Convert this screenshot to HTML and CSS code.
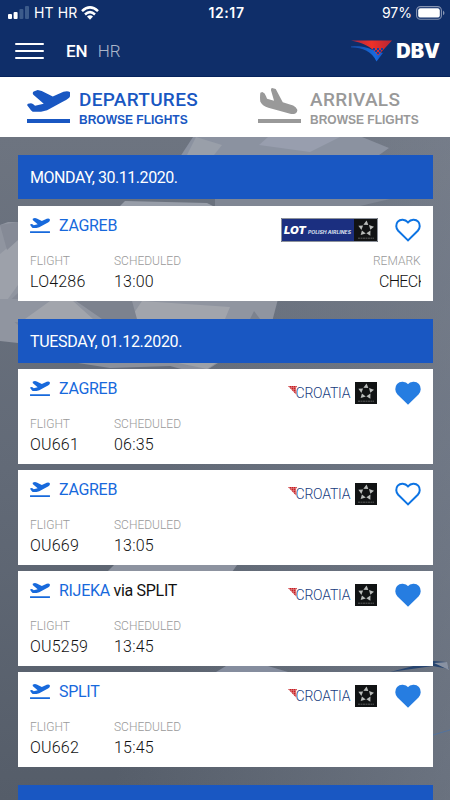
FILE: index.html
```html
<!DOCTYPE html>
<html lang="en">
<head>
    <meta charset="UTF-8">
    <meta name="viewport" content="width=device-width, initial-scale=1.0">
    <title>DBV Departures</title>
    <link rel="stylesheet" href="styles.css">
</head>
<body>
    <!-- shared icons -->
    <svg class="sprite" width="0" height="0">
        <symbol id="takeoff" viewBox="0 0 130 98">
            <path d="M1 46Q0 43 3 41L12 39Q18 40 24 47L50 41L19 14Q15 8 20 4L32 0L44 3L77 19L109 5Q122 1 128 6Q132 14 126 23Q118 30 108 34L60 60L42 65H17Q11 61 8 55ZM0 86H130V98H0Z"/>
        </symbol>
        <symbol id="land" viewBox="0 0 130 104">
            <path d="M7 14L13 12Q21 15 24 24L27 32L48 38L39 7Q38 1 42 0L53 3L74 42L105 52Q114 56 117 64Q119 71 113 75Q106 79 96 77L31 59Q14 54 7 41Q5 29 7 14ZM0 92H130V104H0Z"/>
        </symbol>
        <symbol id="heart" viewBox="0 0 26 24">
            <path d="M13 22.4L3.2 12.8C.8 10.3.6 6.2 2.8 3.7C5.4.8 10 1 13 4.4C16 1 20.6.8 23.2 3.7C25.4 6.2 25.2 10.3 22.8 12.8Z"/>
        </symbol>
        <symbol id="star" viewBox="0 0 22 22">
            <path fill="#111314" d="M0 0H22V22H0Z"/>
            <g fill="#b9bcba">
                <path id="ray" d="M11.6 1.6L13.3 6L8.4 5.8Z"/>
                <use href="#ray" transform="rotate(72 11 9.8)"/>
                <use href="#ray" transform="rotate(144 11 9.8)"/>
                <use href="#ray" transform="rotate(216 11 9.8)"/>
                <use href="#ray" transform="rotate(288 11 9.8)"/>
            </g>
            <path stroke="#5c5e5e" stroke-width="1" stroke-dasharray="2 .5" d="M3 19.2H19"/>
        </symbol>
        <pattern id="checks" width="2" height="2" patternUnits="userSpaceOnUse">
            <path fill="#e08c8c" d="M0 0H2V2H0Z"/>
            <path fill="#c81e24" d="M0 0H1.4V1.4H0Z"/>
        </pattern>
        <symbol id="wing" viewBox="0 0 9 9">
            <path fill="url(#checks)" d="M0 0H9L8 2V8.5Z"/>
        </symbol>
    </svg>

    <header class="header">
        <div class="status">
            <div class="status-left">
                <svg width="22" height="13" viewBox="0 0 22 13">
                    <g fill="#fff"><rect y="8" width="4" height="5" rx="1"/><rect x="5.6" y="6" width="4" height="7" rx="1"/></g>
                    <g fill="#3c5b8b"><rect x="11.4" y="3" width="4" height="10" rx="1"/><rect x="17" width="4" height="13" rx="1"/></g>
                </svg>
                <span class="carrier">HT HR</span>
                <svg width="18" height="14" viewBox="0 0 18 14" fill="none" stroke="#fff" stroke-width="2.5">
                    <path d="M1 5.2Q9-2.4 17 5.2M4 8.5Q9 3.8 14 8.5"/>
                    <path fill="#fff" stroke="none" d="M6 10.6Q9 8.1 12 10.6L9 13.7Z"/>
                </svg>
            </div>
            <span class="clock">12:17</span>
            <div class="status-right">
                <span class="percent">97%</span>
                <svg width="29" height="14" viewBox="0 0 29 14">
                    <rect x=".6" y=".6" width="24.8" height="12.6" rx="3.8" fill="none" stroke="#8795b3" stroke-width="1.1"/>
                    <rect x="2.2" y="2.2" width="21.6" height="9.4" rx="2.2" fill="#fff"/>
                    <path fill="#8795b3" d="M27 4.6Q30 7 27 9.2Z"/>
                </svg>
            </div>
        </div>
        <div class="nav">
            <div class="menu"><i></i><i></i><i></i></div>
            <span class="lang active">EN</span>
            <span class="lang">HR</span>
            <div class="brand">
                <svg width="42" height="22" viewBox="0 0 42 22">
                    <defs>
                        <linearGradient id="red"><stop offset="0" stop-color="#a92744"/><stop offset=".5" stop-color="#ef3128"/><stop offset="1" stop-color="#b62635"/></linearGradient>
                        <linearGradient id="blue"><stop offset="0" stop-color="#154a9f"/><stop offset=".6" stop-color="#176be0"/><stop offset="1" stop-color="#1139a6"/></linearGradient>
                    </defs>
                    <path fill="url(#blue)" d="M0 6.2Q12 5.5 22 10L32 13L41 1L25.5 21.4Q22 14 15 10.5Q9 7.5 0 7.6Z"/>
                    <path fill="url(#red)" d="M0 .4H41L27 15.5Q23 9 15 5.2Q9 2 0 .4Z"/>
                    <path fill="#153f9f" d="M22 8h2v2h-2zM26 8h2v2h-2zM30 8h2v2h-2zM24 10h2v2h-2zM28 10h2v2h-2zM26 12h2v2h-2z"/>
                </svg>
                <span class="code">DBV</span>
            </div>
        </div>
    </header>

    <nav class="tabs">
        <div class="tab active">
            <svg class="tab-icon" width="43.5" height="33"><use href="#takeoff"/></svg>
            <div>
                <div class="tab-title">DEPARTURES</div>
                <div class="tab-sub">BROWSE FLIGHTS</div>
            </div>
        </div>
        <div class="tab">
            <svg class="tab-icon land" width="43.5" height="35"><use href="#land"/></svg>
            <div>
                <div class="tab-title">ARRIVALS</div>
                <div class="tab-sub">BROWSE FLIGHTS</div>
            </div>
        </div>
    </nav>

    <main class="board">
        <svg class="backdrop" width="450" height="663" viewBox="0 137 450 663">
            <path fill="#8b92a0" d="M178 160L193 137H362L389 148L372 160Z"/>
            <path fill="#999fa9" d="M187 155L196 137L222 145L210 160Z"/>
            <path fill="#989eae" d="M259 145L268 137H340L310 152Z"/>
            <path fill="#989ea9" d="M120 206L125 201L207 203L213 206Z"/>
            <path fill="#808794" d="M215 199H390L360 206H215Z"/>
            <path fill="#9095a0" d="M0 225L8 222H18V343L0 341Z"/>
            <path fill="#9da1aa" d="M0 254L18 239V285L0 310Z"/>
            <path fill="#858a96" d="M0 225L18 222V240L7 250ZM0 310L18 293V325Z"/>
            <path fill="#9095a0" d="M0 299H278L272 322H0Z"/>
            <path fill="#a2a5ac" d="M50 301H73L93 319H25ZM130 319L142 301L230 307L225 319Z"/>
            <path fill="#7c828e" d="M76 301H132L137 319H102ZM250 319L254 311L260 319Z"/>
            <path fill="#8b909b" d="M78 363H218L207 370H185L170 366L110 368Z"/>
            <path fill="#9da1a8" d="M178 363H216L207 369Z"/>
            <path fill="#8d93a0" d="M107 572L114 565H237L232 572Z"/>
            <path fill="#858d9e" d="M216 672L226 666H268L288 672Z"/>
            <path fill="#26446f" d="M390 672L433 661L446 662L449 669L433 666Z"/>
            <path fill="#8992a2" d="M434 663L447 662L449 670Z"/>
            <path stroke="#53739e" d="M433 735L450 730"/>
        </svg>

        <section class="day">
            <h2 class="date monday">MONDAY, 30.11.2020.</h2>
            <article class="flight">
                <div class="route">
                    <svg class="plane" width="20" height="15"><use href="#takeoff"/></svg>
                    <span class="city">ZAGREB</span>
                    <svg class="airline lot" width="97" height="24" viewBox="0 0 97 24">
                        <path fill="#1b2f80" d="M0 0H97V24H0Z"/>
                        <text class="lot-name" x="3" y="15.5" textLength="22" lengthAdjust="spacingAndGlyphs">LOT</text>
                        <text class="lot-sub" x="27" y="15.5" textLength="43" lengthAdjust="spacingAndGlyphs">POLISH AIRLINES</text>
                        <path fill="#111314" d="M73 0H97V24H73Z"/>
                        <use href="#star" x="74" y="1" width="22" height="22"/>
                        <path fill="none" stroke="#8d929b" stroke-width="1" d="M.5 .5H96.5V23.5H.5Z"/>
                    </svg>
                    <svg class="heart" width="26" height="24"><use href="#heart"/></svg>
                </div>
                <div class="details">
                    <div class="number"><label>FLIGHT</label><p>LO4286</p></div>
                    <div class="time"><label>SCHEDULED</label><p>13:00</p></div>
                    <div class="remark"><label>REMARK</label><p>CHECK</p></div>
                </div>
            </article>
        </section>

        <section class="day">
            <h2 class="date">TUESDAY, 01.12.2020.</h2>
            <article class="flight">
                <div class="route">
                    <svg class="plane" width="20" height="15"><use href="#takeoff"/></svg>
                    <span class="city">ZAGREB</span>
                    <div class="airline">
                        <svg class="wing" width="9" height="9"><use href="#wing"/></svg>
                        <span class="croatia">CROATIA</span>
                        <svg width="22" height="22"><use href="#star"/></svg>
                    </div>
                    <svg class="heart saved" width="26" height="24"><use href="#heart"/></svg>
                </div>
                <div class="details">
                    <div class="number"><label>FLIGHT</label><p>OU661</p></div>
                    <div class="time"><label>SCHEDULED</label><p>06:35</p></div>
                </div>
            </article>
            <article class="flight">
                <div class="route">
                    <svg class="plane" width="20" height="15"><use href="#takeoff"/></svg>
                    <span class="city">ZAGREB</span>
                    <div class="airline">
                        <svg class="wing" width="9" height="9"><use href="#wing"/></svg>
                        <span class="croatia">CROATIA</span>
                        <svg width="22" height="22"><use href="#star"/></svg>
                    </div>
                    <svg class="heart" width="26" height="24"><use href="#heart"/></svg>
                </div>
                <div class="details">
                    <div class="number"><label>FLIGHT</label><p>OU669</p></div>
                    <div class="time"><label>SCHEDULED</label><p>13:05</p></div>
                </div>
            </article>
            <article class="flight">
                <div class="route">
                    <svg class="plane" width="20" height="15"><use href="#takeoff"/></svg>
                    <span class="city">RIJEKA <span class="via">via SPLIT</span></span>
                    <div class="airline">
                        <svg class="wing" width="9" height="9"><use href="#wing"/></svg>
                        <span class="croatia">CROATIA</span>
                        <svg width="22" height="22"><use href="#star"/></svg>
                    </div>
                    <svg class="heart saved" width="26" height="24"><use href="#heart"/></svg>
                </div>
                <div class="details">
                    <div class="number"><label>FLIGHT</label><p>OU5259</p></div>
                    <div class="time"><label>SCHEDULED</label><p>13:45</p></div>
                </div>
            </article>
            <article class="flight">
                <div class="route">
                    <svg class="plane" width="20" height="15"><use href="#takeoff"/></svg>
                    <span class="city">SPLIT</span>
                    <div class="airline">
                        <svg class="wing" width="9" height="9"><use href="#wing"/></svg>
                        <span class="croatia">CROATIA</span>
                        <svg width="22" height="22"><use href="#star"/></svg>
                    </div>
                    <svg class="heart saved" width="26" height="24"><use href="#heart"/></svg>
                </div>
                <div class="details">
                    <div class="number"><label>FLIGHT</label><p>OU662</p></div>
                    <div class="time"><label>SCHEDULED</label><p>15:45</p></div>
                </div>
            </article>
        </section>

        <section class="day">
            <h2 class="date next"></h2>
        </section>
    </main>
</body>
</html>
```
FILE: styles.css
```css
:root {
    --navy: #0f2e69;
    --blue: #1957c2;
    --link: #1769dc;
    --grey: #999;
}

* {
    margin: 0;
    padding: 0;
    box-sizing: border-box;
}

body {
    font-family: Roboto, "Liberation Sans", sans-serif;
    height: 800px;
    overflow: hidden;
    display: flex;
    flex-direction: column;
}

svg {
    display: block;
    flex: none;
}

.sprite {
    position: absolute;
}

/* Header */
.header {
    height: 77px;
    flex: none;
    background: var(--navy);
    border-bottom: 1px solid #06235c;
    color: #fff;
}

.status {
    height: 25px;
    display: grid;
    grid-template-columns: 1fr auto 1fr;
    align-items: center;
    padding: 0 5px 0 8px;
    font-family: Inter, sans-serif;
    font-size: 14px;
    line-height: 25px;
}

.status-left,
.status-right {
    display: flex;
    align-items: center;
}

.status-left {
    gap: 4px;
}

.status-right {
    justify-content: flex-end;
    gap: 4px;
}

.carrier {
    letter-spacing: 0.1px;
}

.clock {
    font-weight: 600;
    letter-spacing: 0.6px;
}

.nav {
    height: 51px;
    display: flex;
    align-items: center;
    padding: 0 10px 0 15px;
}

.menu {
    width: 29px;
    display: flex;
    flex-direction: column;
    gap: 5px;
    margin-right: 22px;
}

.menu i {
    height: 2px;
    border-radius: 1px;
    background: #fff;
}

.lang {
    font-size: 17px;
    font-weight: 300;
    line-height: 20px;
    opacity: 0.65;
    margin-right: 10px;
}

.lang.active {
    font-weight: 500;
    opacity: 1;
}

.brand {
    display: flex;
    align-items: center;
    gap: 3px;
    margin-left: auto;
}

.code {
    font-family: Inter, sans-serif;
    font-size: 20px;
    font-weight: 900;
    line-height: 24px;
}

/* Tabs */
.tabs {
    height: 60px;
    flex: none;
    display: flex;
    background: #fff;
    padding-left: 26.5px;
}

.tab {
    width: 191px;
    display: flex;
    gap: 9px;
    padding-top: 12px;
    color: var(--grey);
    fill: var(--grey);
}

.tab.active {
    width: 231px;
    color: var(--blue);
    fill: var(--blue);
}

.tab-icon {
    margin-top: 0.5px;
}

.tab-icon.land {
    margin-top: -1.5px;
}

.tab-title {
    font-size: 19px;
    font-weight: 500;
    line-height: 22px;
    letter-spacing: 0.3px;
}

.tab-sub {
    font: bold 12px/14px "Liberation Sans", sans-serif;
    margin-top: 2px;
}

/* Flight list */
.board {
    flex: 1;
    min-height: 0;
    overflow: hidden;
    position: relative;
    padding: 18px 17px 0 18px;
    background: linear-gradient(100deg, rgba(91, 98, 114, 0) 40%, rgba(145, 153, 168, 0.35)), linear-gradient(#6d7480, #626a77 50%, #555d69);
}

.backdrop {
    position: absolute;
    top: 0;
    left: 0;
}

.day {
    position: relative;
    display: flex;
    flex-direction: column;
    gap: 6px;
    margin-bottom: 18px;
}

.day:first-of-type {
    margin-bottom: 18.4px;
}

.day:first-of-type .flight {
    margin-top: 0.6px;
}

.date {
    height: 44px;
    padding: 1px 0 0 12px;
    background: var(--blue);
    color: #fff;
    font-size: 16px;
    font-weight: 400;
    line-height: 44px;
    letter-spacing: -0.3px;
}

.date.monday {
    letter-spacing: -0.45px;
}

.date.next {
    height: 15px;
}

.flight {
    height: 95px;
    padding: 10px 12px 0;
    background: #fff;
}

.route {
    height: 28px;
    display: flex;
    align-items: center;
}

.plane {
    margin: -8px 9px 0 0;
    fill: var(--link);
}

.city {
    margin-top: -7px;
    color: var(--link);
    font-size: 16px;
    line-height: 20px;
    letter-spacing: -0.3px;
}

.via {
    color: #111;
}

.airline {
    display: flex;
    align-items: center;
    margin: 0 18px 0 auto;
}

.airline.lot {
    margin-right: 17px;
}

.wing {
    margin: -4px -1.5px 0 0;
}

.croatia {
    width: 59.5px;
    color: #173c80;
    font-size: 14px;
    font-weight: 300;
    line-height: 22px;
    letter-spacing: -0.2px;
    white-space: nowrap;
}

.lot-name {
    font: italic 900 10.5px Inter, sans-serif;
    fill: #fff;
}

.lot-sub {
    font: italic 700 4.6px Inter, sans-serif;
    fill: #dfe3f0;
}

.heart {
    fill: none;
    stroke: #0c73e3;
    stroke-width: 2;
}

.heart.saved {
    fill: #267de1;
    stroke: #267de1;
}

.details {
    display: flex;
    margin-top: 9px;
}

.details label {
    display: block;
    color: #999;
    font-size: 12px;
    font-weight: 300;
    line-height: 17px;
}

.details p {
    color: #111;
    font-size: 16px;
    font-weight: 300;
    line-height: 24px;
    letter-spacing: 0.2px;
}

.details label + p {
    padding-top: 0;
}

.number {
    width: 84px;
}

.remark {
    width: 48px;
    margin-left: auto;
}

.remark p {
    margin-left: 6px;
    overflow: hidden;
    letter-spacing: -0.7px;
}
```
